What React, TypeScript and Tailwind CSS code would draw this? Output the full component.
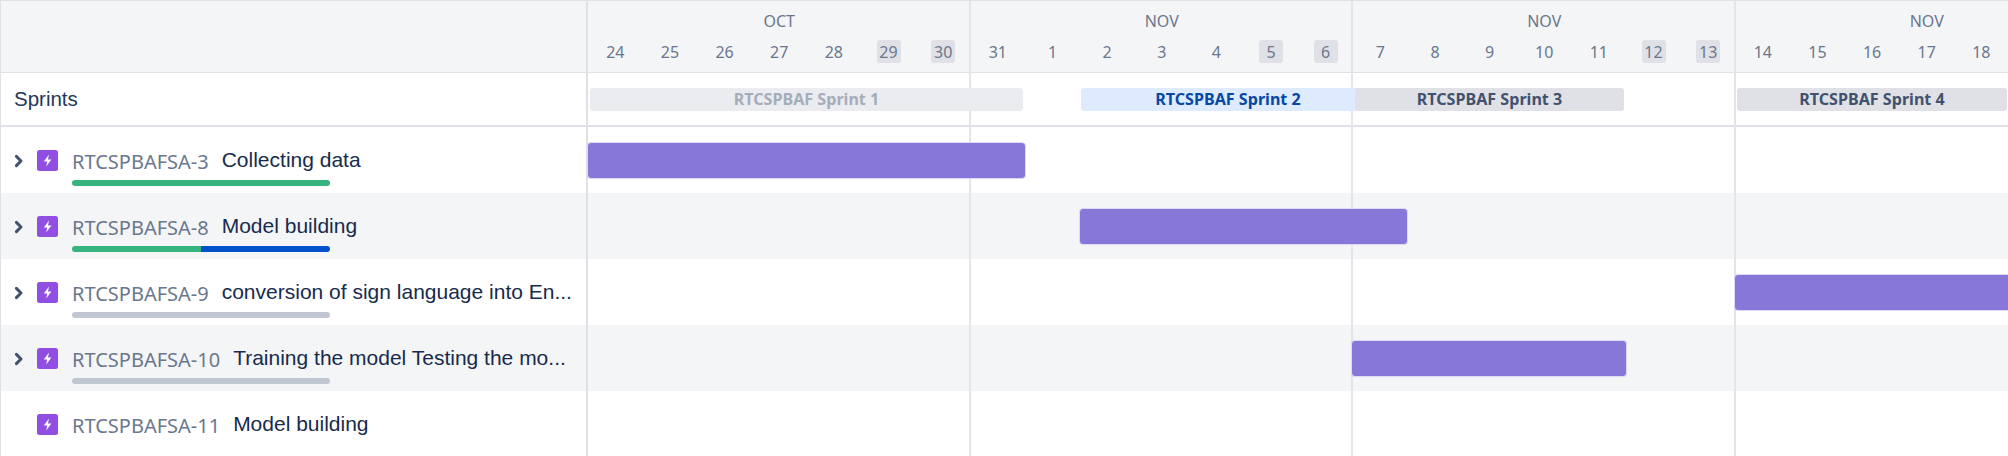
const weeks = [
  { month: "OCT", days: [["24"], ["25"], ["26"], ["27"], ["28"], ["29", 1], ["30", 1]] },
  { month: "NOV", days: [["31"], ["1"], ["2"], ["3"], ["4"], ["5", 1], ["6", 1]] },
  { month: "NOV", days: [["7"], ["8"], ["9"], ["10"], ["11"], ["12", 1], ["13", 1]] },
  { month: "NOV", days: [["14"], ["15"], ["16"], ["17"], ["18"], [""], [""]] },
];

const rows = [
  { id: "RTCSPBAFSA-3", title: "Collecting data", chevron: true, bar: "green", ml: "-ml-px", w: "w-[439px]", alt: false },
  { id: "RTCSPBAFSA-8", title: "Model building", chevron: true, bar: "mixed", ml: "ml-[491px]", w: "w-[329px]", alt: true },
  { id: "RTCSPBAFSA-9", title: "conversion of sign language into En...", chevron: true, bar: "gray", ml: "ml-[1146px]", w: "w-[300px]", alt: false },
  { id: "RTCSPBAFSA-10", title: "Training the model Testing the mo...", chevron: true, bar: "gray", ml: "ml-[763px]", w: "w-[276px]", alt: true },
  { id: "RTCSPBAFSA-11", title: "Model building", chevron: false, bar: "", ml: "", w: "", alt: false },
];

function EpicIcon() {
  return (
    <svg width="21" height="21" viewBox="0 0 21 21" className="mt-[1px] shrink-0">
      <rect width="21" height="21" rx="2.5" fill="#904EE2" />
      <path d="M12 4.6 6.8 11.6h3.4l-1 5 5.2-7.2h-3.4z" fill="#fff" />
    </svg>
  );
}

function Chevron() {
  return (
    <svg width="10" height="14" viewBox="0 0 10 14" className="shrink-0">
      <path d="M2.4 2.4 7 7 2.4 11.6" fill="none" stroke="#42526E" strokeWidth="3" strokeLinecap="round" strokeLinejoin="round" />
    </svg>
  );
}

function Progress({ kind }: { kind: string }) {
  if (kind === "green") return <div className="h-[6px] w-[258px] rounded-full bg-[#36B37E]" />;
  if (kind === "gray") return <div className="h-[6px] w-[258px] rounded-full bg-[#C1C7D0]" />;
  if (kind === "mixed")
    return (
      <div className="flex h-[6px] w-[258px] overflow-hidden rounded-full">
        <div className="w-1/2 bg-[#36B37E]" />
        <div className="w-1/2 bg-[#0052CC]" />
      </div>
    );
  return <div className="h-[6px]" />;
}

function Sprint({ label, cls }: { label: string; cls: string }) {
  return (
    <div className={`flex h-[23px] items-center justify-center rounded-[3px] pt-[1px] text-[16.1px] font-bold leading-none ${cls}`}>
      {label}
    </div>
  );
}

export default function App() {
  return (
    <div className="flex h-[456px] w-[2008px] overflow-hidden bg-white font-['Liberation_Sans',sans-serif]">
      <div className="flex w-[588px] shrink-0 flex-col border-x border-[#DFE1E6] border-r-2">
        <div className="h-[73px] shrink-0 border-y border-[#DFE1E6] bg-[#F4F5F7]" />
        <div className="flex h-[54px] shrink-0 items-center border-b-2 border-[#DFE1E6] pl-[13px] text-[20.5px] text-[#253858]">
          Sprints
        </div>
        {rows.map((r) => (
          <div key={r.id} className={`flex h-[66px] shrink-0 flex-col pt-[21px] ${r.alt ? "bg-[#F4F5F7]" : "bg-white"}`}>
            <div className="flex h-[24px] items-center">
              <div className="mt-[1px] flex w-[36px] shrink-0 justify-start pl-[13px]">{r.chevron && <Chevron />}</div>
              <EpicIcon />
              <span className="ml-[14px] translate-y-[2px] font-['Noto_Sans',sans-serif] text-[20px] text-[#6B778C]">{r.id}</span>
              <span className="ml-[13px] whitespace-nowrap text-[21px] text-[#172B4D]">{r.title}</span>
            </div>
            <div className="ml-[71px] mt-[8px]">
              <Progress kind={r.bar} />
            </div>
          </div>
        ))}
      </div>

      <div className="relative flex-1 font-['Noto_Sans',sans-serif]">
        <div className="flex h-[73px] border-y border-[#DFE1E6] bg-[#F4F5F7]">
          {weeks.map((w, i) => (
            <div key={i} className="flex w-[382.5px] shrink-0 flex-col items-center pt-[8px]">
              <div className="text-[16px] leading-[24px] text-[#6B778C]">{w.month}</div>
              <div className="mt-[7px] grid w-full grid-cols-7">
                {w.days.map(([d, off], j) => (
                  <div key={j} className="flex justify-center">
                    <span className={`flex h-[23px] w-[24px] items-center justify-center rounded-[3px] text-[16px] text-[#6B778C] ${off ? "bg-[#DFE1E6]" : ""}`}>
                      {d}
                    </span>
                  </div>
                ))}
              </div>
            </div>
          ))}
        </div>

        <div className="flex h-[54px] items-center border-b-2 border-[#DFE1E6]">
          <Sprint label="RTCSPBAF Sprint 1" cls="ml-[2px] w-[433px] shrink-0 bg-[#EBECF0] text-[#A5ADBA] z-10" />
          <Sprint label="RTCSPBAF Sprint 2" cls="ml-[58px] w-[294px] shrink-0 bg-[#DEEBFF] text-[#0747A6] z-10" />
          <Sprint label="RTCSPBAF Sprint 3" cls="-ml-[20px] w-[269px] shrink-0 bg-[#DFE1E6] text-[#42526E] z-20" />
          <Sprint label="RTCSPBAF Sprint 4" cls="ml-[113px] w-[270px] shrink-0 bg-[#DFE1E6] text-[#42526E] z-10" />
        </div>

        {rows.map((r) => (
          <div key={r.id} className={`flex h-[66px] items-start pt-[15px] ${r.alt ? "bg-[#F4F5F7]" : "bg-white"}`}>
            {r.w && <div className={`relative z-10 h-[37px] shrink-0 rounded-[4px] border border-[#DDD9F2] bg-[#8777D9] ${r.ml} ${r.w}`} />}
          </div>
        ))}

        <div className="pointer-events-none absolute inset-0 flex pt-[1px]">
          {weeks.map((w, i) => (
            <div key={i} className="w-[382.5px] shrink-0 border-r-2 border-[#E4E5EC]" />
          ))}
        </div>
      </div>
    </div>
  );
}
